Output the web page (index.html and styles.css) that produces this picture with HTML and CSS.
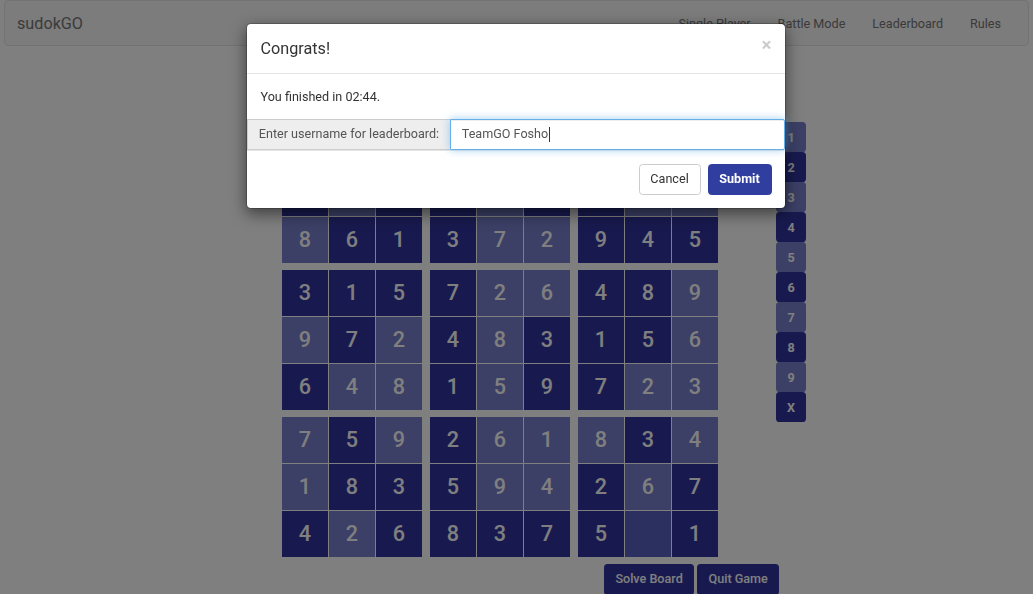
FILE: index.html
```html
<!DOCTYPE html>
<html lang="en">
<head>
<meta charset="utf-8">
<title>sudokGO</title>
<link rel="stylesheet" href="styles.css">
</head>
<body>
<nav class="navbar">
  <a class="brand" href="#">sudokGO</a>
  <ul class="nav-links">
    <li><a href="#">Single Player</a></li>
    <li><a href="#">Battle Mode</a></li>
    <li><a href="#">Leaderboard</a></li>
    <li><a href="#">Rules</a></li>
  </ul>
</nav>

<main class="game">
  <div class="play-row">
    <div class="board">
      <div class="block">
        <div class="cell filled">2</div><div class="cell given">9</div><div class="cell filled">4</div>
        <div class="cell filled">5</div><div class="cell given">3</div><div class="cell filled">7</div>
        <div class="cell given">8</div><div class="cell filled">6</div><div class="cell filled">1</div>
      </div>
      <div class="block">
        <div class="cell given">6</div><div class="cell filled">1</div><div class="cell filled">5</div>
        <div class="cell filled">9</div><div class="cell given">4</div><div class="cell filled">8</div>
        <div class="cell filled">3</div><div class="cell given">7</div><div class="cell given">2</div>
      </div>
      <div class="block">
        <div class="cell filled">3</div><div class="cell given">7</div><div class="cell filled">8</div>
        <div class="cell filled">6</div><div class="cell given">1</div><div class="cell given">2</div>
        <div class="cell filled">9</div><div class="cell filled">4</div><div class="cell filled">5</div>
      </div>
      <div class="block">
        <div class="cell filled">3</div><div class="cell filled">1</div><div class="cell filled">5</div>
        <div class="cell given">9</div><div class="cell filled">7</div><div class="cell given">2</div>
        <div class="cell filled">6</div><div class="cell given">4</div><div class="cell given">8</div>
      </div>
      <div class="block">
        <div class="cell filled">7</div><div class="cell given">2</div><div class="cell given">6</div>
        <div class="cell filled">4</div><div class="cell given">8</div><div class="cell filled">3</div>
        <div class="cell filled">1</div><div class="cell given">5</div><div class="cell filled">9</div>
      </div>
      <div class="block">
        <div class="cell filled">4</div><div class="cell filled">8</div><div class="cell given">9</div>
        <div class="cell filled">1</div><div class="cell filled">5</div><div class="cell given">6</div>
        <div class="cell filled">7</div><div class="cell given">2</div><div class="cell given">3</div>
      </div>
      <div class="block">
        <div class="cell given">7</div><div class="cell filled">5</div><div class="cell given">9</div>
        <div class="cell given">1</div><div class="cell filled">8</div><div class="cell filled">3</div>
        <div class="cell filled">4</div><div class="cell given">2</div><div class="cell filled">6</div>
      </div>
      <div class="block">
        <div class="cell filled">2</div><div class="cell given">6</div><div class="cell given">1</div>
        <div class="cell filled">5</div><div class="cell given">9</div><div class="cell given">4</div>
        <div class="cell filled">8</div><div class="cell filled">3</div><div class="cell filled">7</div>
      </div>
      <div class="block">
        <div class="cell given">8</div><div class="cell filled">3</div><div class="cell given">4</div>
        <div class="cell filled">2</div><div class="cell given">6</div><div class="cell filled">7</div>
        <div class="cell filled">5</div><div class="cell empty"></div><div class="cell filled">1</div>
      </div>
    </div>

    <div class="numpad">
      <button class="key light">1</button>
      <button class="key dark">2</button>
      <button class="key light">3</button>
      <button class="key dark">4</button>
      <button class="key light">5</button>
      <button class="key dark">6</button>
      <button class="key light">7</button>
      <button class="key dark">8</button>
      <button class="key light">9</button>
      <button class="key dark">X</button>
    </div>
  </div>

  <div class="actions">
    <button class="btn btn-game">Solve Board</button>
    <button class="btn btn-game">Quit Game</button>
  </div>
</main>

<div class="backdrop"></div>

<div class="modal">
  <div class="modal-header">
    <h4 class="modal-title">Congrats!</h4>
    <span class="close">&times;</span>
  </div>
  <div class="modal-body">
    <p>You finished in 02:44.</p>
  </div>
  <div class="input-group">
    <span class="addon">Enter username for leaderboard:</span>
    <div class="form-control focused">TeamGO Fosho<span class="caret"></span></div>
  </div>
  <div class="modal-footer">
    <button class="btn btn-default">Cancel</button>
    <button class="btn btn-primary">Submit</button>
  </div>
</div>
</body>
</html>
```

FILE: styles.css
```css
* {
  box-sizing: border-box;
}

body {
  margin: 0;
  font-family: Roboto, "Helvetica Neue", Arial, sans-serif;
  font-size: 12.6px;
  line-height: 1.42857;
  color: #333;
  background: #fff;
}

/* ---------- navbar ---------- */
.navbar {
  height: 46px;
  margin: 0 4px;
  padding: 1px 0 0 12px;
  background: #f8f8f8;
  border: 1px solid #e7e7e7;
  border-radius: 4px;
  display: flex;
  align-items: center;
  justify-content: space-between;
}

.brand {
  font-size: 16.2px;
  color: #777;
  text-decoration: none;
}

.nav-links {
  list-style: none;
  margin: 0;
  padding: 0 13.5px 0 0;
  display: flex;
}

.nav-links a {
  display: block;
  padding: 0 13.5px;
  color: #777;
  text-decoration: none;
  font-size: 12.6px;
}

/* ---------- game ---------- */
.game {
  padding: 77px 0 0 282px;
}

.play-row {
  display: flex;
  align-items: flex-start;
}

.board {
  display: grid;
  grid-template-columns: repeat(3, 140px);
  column-gap: 8px;
  row-gap: 7px;
}

.block {
  display: grid;
  grid-template-columns: repeat(3, 46px);
  grid-auto-rows: 46px;
  gap: 1px;
}

.cell {
  display: flex;
  align-items: center;
  justify-content: center;
  font-size: 21.6px;
  font-weight: 500;
  color: #fff;
}

.cell.filled {
  background: #30359f;
}

.cell.given {
  background: #7880cc;
}

.cell.empty {
  background: #5860c2;
}

.numpad {
  display: flex;
  flex-direction: column;
  margin: -1px 0 0 58px;
}

.key {
  width: 30px;
  height: 30px;
  padding: 0;
  border: 0;
  border-radius: 3.6px;
  font-family: inherit;
  font-size: 12.6px;
  font-weight: 700;
  color: #fff;
}

.key.dark {
  background: #30359f;
}

.key.light {
  background: #7880cc;
}

.actions {
  display: flex;
  gap: 3px;
  margin: 7px 0 0 322px;
}

.btn {
  height: 30.6px;
  padding: 0 10.8px;
  font-family: inherit;
  font-size: 12.6px;
  border: 1px solid transparent;
  border-radius: 3.6px;
  line-height: 1;
}

.btn-game {
  padding: 0 10.4px;
  background: #30359f;
  color: #fff;
  font-weight: 500;
}

/* ---------- modal ---------- */
.backdrop {
  position: fixed;
  inset: 0;
  background: rgba(0, 0, 0, 0.5);
}

.modal {
  position: fixed;
  left: 246px;
  top: 23px;
  width: 540px;
  background: #fff;
  border: 1px solid rgba(0, 0, 0, 0.2);
  border-radius: 5px;
  box-shadow: 0 5px 15px rgba(0, 0, 0, 0.5);
  background-clip: padding-box;
}

.modal-header {
  height: 50px;
  padding: 0 13.5px;
  border-bottom: 1px solid #e5e5e5;
  display: flex;
  align-items: center;
  justify-content: space-between;
}

.modal-title {
  margin: 0;
  font-size: 16.2px;
  font-weight: 400;
  color: #333;
}

.close {
  align-self: flex-start;
  margin-top: 12px;
  font-size: 18.9px;
  font-weight: 700;
  line-height: 1;
  color: #000;
  opacity: 0.2;
}

.modal-body {
  padding: 13.5px;
}

.modal-body p {
  margin: 0;
}

.input-group {
  display: flex;
  height: 31px;
}

.addon {
  display: flex;
  align-items: center;
  padding: 0 10.8px;
  background: #eee;
  border: 1px solid #ccc;
  border-right: 0;
  color: #555;
  white-space: nowrap;
}

.form-control {
  flex: 1;
  display: flex;
  align-items: center;
  padding: 0 10.8px;
  color: #555;
  background: #fff;
  border: 1px solid #ccc;
  border-radius: 0 2px 2px 0;
}

.form-control.focused {
  border-color: #66afe9;
  box-shadow: inset 0 1px 1px rgba(0, 0, 0, 0.075), 0 0 8px rgba(102, 175, 233, 0.6);
}

.caret {
  display: inline-block;
  width: 1px;
  height: 15px;
  margin-left: 1px;
  background: #333;
}

.modal-footer {
  padding: 13.5px 13.5px 12.5px;
  border-top: 1px solid #e5e5e5;
  display: flex;
  justify-content: flex-end;
  gap: 7px;
}

.btn-default {
  background: #fff;
  border-color: #ccc;
  color: #333;
}

.btn-primary {
  background: #303f9f;
  border-color: #303f9f;
  color: #fff;
  font-weight: 700;
}
```
